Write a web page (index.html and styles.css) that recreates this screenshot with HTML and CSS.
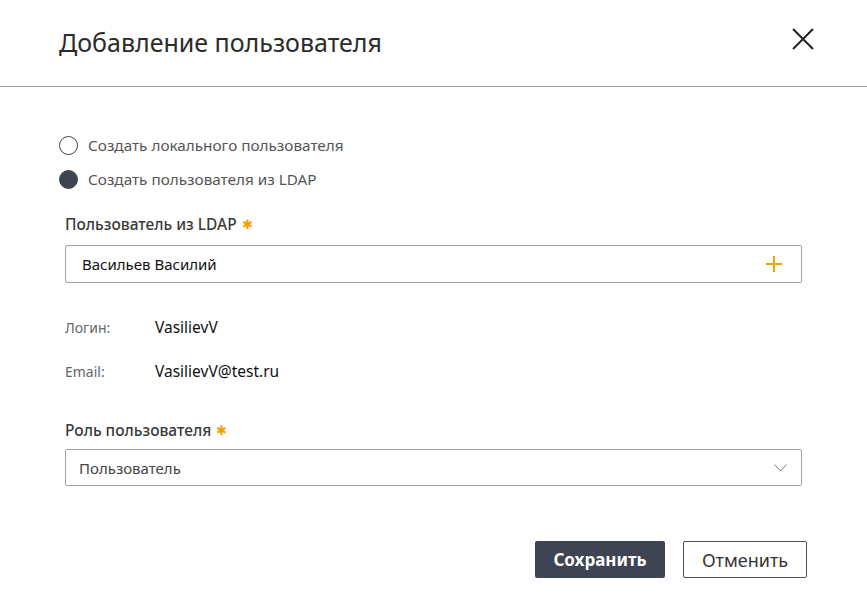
FILE: index.html
```html
<!DOCTYPE html>
<html lang="ru">
<head>
<meta charset="utf-8">
<link rel="stylesheet" href="styles.css">
</head>
<body>
<div class="dialog">
  <header class="head">
    <h1 class="title">Добавление пользователя</h1>
    <button class="close" aria-label="Закрыть">
      <svg width="24" height="24" viewBox="0 0 24 24"><path d="M2 2 L22 22 M22 2 L2 22" stroke="#222" stroke-width="2" fill="none"/></svg>
    </button>
  </header>
  <div class="body">
    <div class="radios">
      <label class="radio"><span class="dot"></span>Создать локального пользователя</label>
      <label class="radio"><span class="dot on"></span>Создать пользователя из LDAP</label>
    </div>
    <div class="field">
      <div class="flabel">Пользователь из LDAP <span class="star">✱</span></div>
      <div class="input">
        <span class="val">Васильев Василий</span>
        <svg class="plus" width="18" height="18" viewBox="0 0 18 18"><path d="M9 1 V17 M1 9 H17" stroke="#f5a000" stroke-width="2"/></svg>
      </div>
    </div>
    <div class="info">
      <div class="row"><span class="k">Логин:</span><span class="v">VasilievV</span></div>
      <div class="row"><span class="k">Email:</span><span class="v">VasilievV@test.ru</span></div>
    </div>
    <div class="field role">
      <div class="flabel">Роль пользователя <span class="star">✱</span></div>
      <div class="input select">
        <span class="val gray">Пользователь</span>
        <svg class="chev" width="13" height="8" viewBox="0 0 13 8"><path d="M0.5 0.5 L6.5 7 L12.5 0.5" stroke="#777" stroke-width="1" fill="none"/></svg>
      </div>
    </div>
  </div>
  <footer class="foot">
    <button class="btn primary">Сохранить</button>
    <button class="btn secondary">Отменить</button>
  </footer>
</div>
</body>
</html>
```
FILE: styles.css
```css
html, body {
  margin: 0;
  padding: 0;
  background: #fff;
}
body {
  font-family: "Noto Sans", "Open Sans", sans-serif;
  color: #333;
  width: 867px;
  height: 610px;
  overflow: hidden;
}
.dialog {
  display: flex;
  flex-direction: column;
}
.head {
  display: flex;
  align-items: center;
  justify-content: space-between;
  height: 87px;
  border-bottom: 1px solid #9aa2aa;
  padding: 0 52px 0 59px;
  box-sizing: border-box;
}
.title {
  margin: 0;
  font-size: 25px;
  font-weight: 400;
  color: #2b2b2b;
  position: relative;
  top: -1px;
}
.close {
  border: 0;
  background: none;
  padding: 0;
  width: 24px;
  height: 24px;
  cursor: pointer;
  position: relative;
  top: -4px;
}
.close svg { display: block; }
.body {
  padding: 47px 65px 0 59px;
  display: flex;
  flex-direction: column;
}
.radios {
  display: flex;
  flex-direction: column;
  gap: 12px;
}
.radio {
  display: flex;
  align-items: center;
  gap: 10px;
  font-size: 15.3px;
  color: #555;
  height: 22px;
}
.dot {
  width: 19px;
  height: 19px;
  border: 1.5px solid #3d4350;
  border-radius: 50%;
  box-sizing: border-box;
}
.dot.on {
  background: #3e4452;
}
.field {
  display: flex;
  flex-direction: column;
  margin-left: 6px;
}
.flabel {
  font-size: 15.5px;
  font-weight: 500;
  color: #3a3a3a;
  height: 24px;
  margin-top: 22px;
  margin-bottom: 9px;
  display: flex;
  align-items: center;
}
.star {
  color: #f5a000;
  font-size: 13px;
  margin-left: 5px;
}
.input {
  height: 38px;
  border: 1px solid #a3a3a3;
  border-radius: 2px;
  box-sizing: border-box;
  display: flex;
  align-items: center;
  justify-content: space-between;
  padding: 0 18px 0 16px;
}
.val {
  font-size: 15px;
  color: #111;
}
.val.gray { color: #444; }
.plus { display: block; }
.info {
  margin-left: 6px;
  margin-top: 34px;
  display: flex;
  flex-direction: column;
  gap: 24px;
}
.row {
  display: flex;
  align-items: center;
  height: 20px;
}
.k {
  width: 90px;
  font-size: 14px;
  color: #666;
}
.v {
  font-size: 15.5px;
  color: #111;
}
.role .flabel { margin-top: 37px; margin-bottom: 7px; }
.select { height: 37px; padding: 0 14px 0 13px; }
.chev { display: block; }
.foot {
  display: flex;
  justify-content: flex-end;
  gap: 18px;
  padding: 55px 60px 0 0;
}
.btn {
  height: 37px;
  font-family: inherit;
  border-radius: 2px;
  cursor: pointer;
  box-sizing: border-box;
}
.primary {
  width: 130px;
  background: #3e4451;
  color: #fff;
  border: 0;
  font-weight: 700;
  font-size: 17px;
}
.secondary {
  width: 124px;
  background: #fff;
  color: #333;
  border: 1px solid #4a4f58;
  font-size: 18px;
}
```
